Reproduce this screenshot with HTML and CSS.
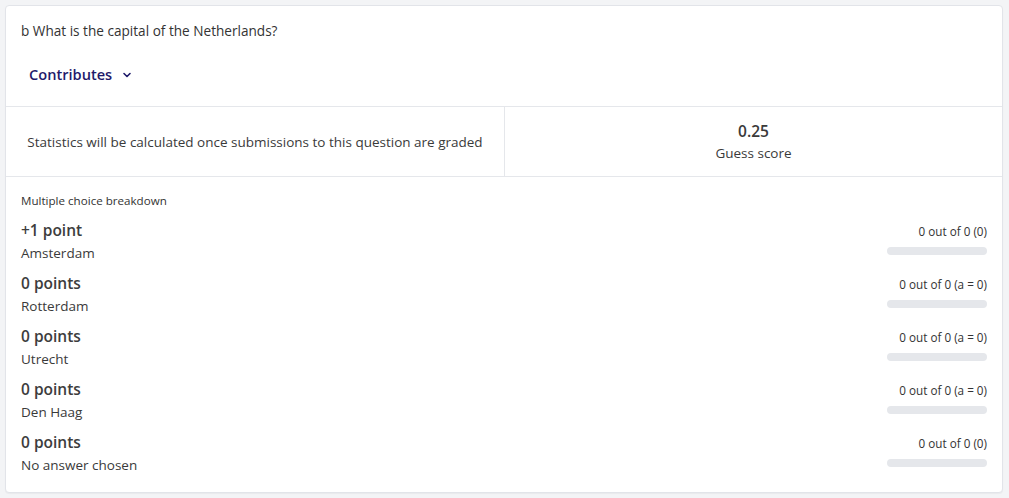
FILE: index.html
```html
<!DOCTYPE html>
<html>
<head>
<meta charset="utf-8">
<link rel="stylesheet" href="styles.css">
</head>
<body>
<div class="card">
  <div class="head">
    <div class="title">b What is the capital of the Netherlands?</div>
    <button class="contrib">Contributes
      <svg class="chev" width="10" height="10" viewBox="0 0 10 10"><path d="M2 3.5 L5 6.5 L8 3.5" fill="none" stroke="#1f1a6b" stroke-width="1.6" stroke-linecap="round" stroke-linejoin="round"/></svg>
    </button>
  </div>
  <div class="stats">
    <div class="cell">Statistics will be calculated once submissions to this question are graded</div>
    <div class="cell score">
      <div class="num">0.25</div>
      <div class="lbl">Guess score</div>
    </div>
  </div>
  <div class="breakdown">
    <div class="bd-title">Multiple choice breakdown</div>
    <div class="rows">
      <div class="row">
        <div class="left"><div class="pts">+1 point</div><div class="ans">Amsterdam</div></div>
        <div class="right"><div class="count">0 out of 0 (0)</div><div class="bar"></div></div>
      </div>
      <div class="row">
        <div class="left"><div class="pts">0 points</div><div class="ans">Rotterdam</div></div>
        <div class="right"><div class="count">0 out of 0 (a = 0)</div><div class="bar"></div></div>
      </div>
      <div class="row">
        <div class="left"><div class="pts">0 points</div><div class="ans">Utrecht</div></div>
        <div class="right"><div class="count">0 out of 0 (a = 0)</div><div class="bar"></div></div>
      </div>
      <div class="row">
        <div class="left"><div class="pts">0 points</div><div class="ans">Den Haag</div></div>
        <div class="right"><div class="count">0 out of 0 (a = 0)</div><div class="bar"></div></div>
      </div>
      <div class="row">
        <div class="left"><div class="pts">0 points</div><div class="ans">No answer chosen</div></div>
        <div class="right"><div class="count">0 out of 0 (0)</div><div class="bar"></div></div>
      </div>
    </div>
  </div>
</div>
</body>
</html>
```

FILE: styles.css
```css
html, body { margin: 0; }
body {
  background: #f3f4f6;
  padding: 5px 6px 5px 5px;
  font-family: "Open Sans", "Noto Sans", sans-serif;
  color: #3a3a3a;
}
.card {
  background: #fff;
  border: 1px solid #e2e4e9;
  border-radius: 4px;
  box-shadow: 0 1px 1px rgba(0,0,0,0.04);
}
.head {
  padding: 15px 15px 14px;
  border-bottom: 1px solid #e5e7eb;
}
.title {
  font-size: 13.6px;
  line-height: 20px;
  margin-bottom: 15px;
  color: #333;
}
.contrib {
  display: inline-flex;
  align-items: center;
  gap: 10px;
  border: 0;
  background: none;
  padding: 8px;
  font-family: inherit;
  font-size: 14.6px;
  font-weight: 600;
  line-height: 20px;
  color: #1f1a6b;
}
.chev { margin-top: 1px; }
.stats {
  display: grid;
  grid-template-columns: 1fr 1fr;
  border-bottom: 1px solid #e5e7eb;
}
.cell {
  height: 69px;
  display: flex;
  flex-direction: column;
  align-items: center;
  justify-content: center;
  font-size: 13.5px;
  line-height: 20px;
  color: #3a3a3a;
  box-sizing: border-box;
}
.cell + .cell { border-left: 1px solid #e5e7eb; }
.score .num { font-size: 15.5px; font-weight: 600; line-height: 22px; color: #3a3a3a; }
.score .lbl { font-size: 13.5px; line-height: 20px; margin-top: 1px; }
.breakdown { padding: 16px 15px 17px; }
.bd-title { font-size: 11.6px; line-height: 16px; color: #333; }
.rows {
  margin-top: 10px;
  display: flex;
  flex-direction: column;
  gap: 9px;
}
.row { display: flex; justify-content: space-between; }
.pts { font-size: 15.5px; font-weight: 600; line-height: 22px; color: #3d3d3d; }
.ans { font-size: 13.5px; line-height: 20px; margin-top: 2px; color: #3a3a3a; }
.right { display: flex; flex-direction: column; align-items: flex-end; padding-top: 4px; }
.count { font-size: 11.7px; line-height: 16px; color: #333; }
.bar { width: 100px; height: 8px; border-radius: 4px; background: #e5e7eb; margin-top: 8px; }
```
